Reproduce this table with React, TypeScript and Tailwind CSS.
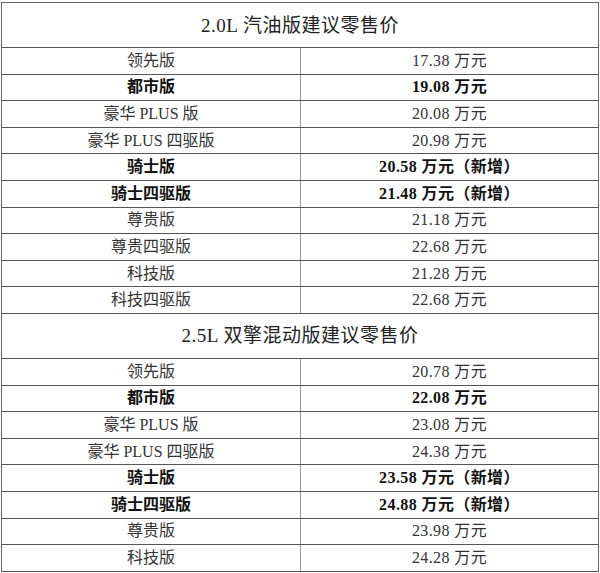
import React from 'react';

type Row = { name: string; price: string; bold?: boolean };

const petrol: Row[] = [
  { name: '领先版', price: '17.38 万元' },
  { name: '都市版', price: '19.08 万元', bold: true },
  { name: '豪华 PLUS 版', price: '20.08 万元' },
  { name: '豪华 PLUS 四驱版', price: '20.98 万元' },
  { name: '骑士版', price: '20.58 万元（新增）', bold: true },
  { name: '骑士四驱版', price: '21.48 万元（新增）', bold: true },
  { name: '尊贵版', price: '21.18 万元' },
  { name: '尊贵四驱版', price: '22.68 万元' },
  { name: '科技版', price: '21.28 万元' },
  { name: '科技四驱版', price: '22.68 万元' },
];

const hybrid: Row[] = [
  { name: '领先版', price: '20.78 万元' },
  { name: '都市版', price: '22.08 万元', bold: true },
  { name: '豪华 PLUS 版', price: '23.08 万元' },
  { name: '豪华 PLUS 四驱版', price: '24.38 万元' },
  { name: '骑士版', price: '23.58 万元（新增）', bold: true },
  { name: '骑士四驱版', price: '24.88 万元（新增）', bold: true },
  { name: '尊贵版', price: '23.98 万元' },
  { name: '科技版', price: '24.28 万元' },
];

const Section = ({ title, rows }: { title: string; rows: Row[] }) => (
  <>
    <div className="h-[45px] flex items-center justify-center border-b border-[#555] text-[19px] tracking-[0.5px] text-[#222]">
      {title}
    </div>
    {rows.map((r, i) => (
      <div key={i} className="grid grid-cols-[299px_1fr] h-[26.6px] border-b border-[#555]">
        <div
          className={`flex items-center justify-center border-r border-[#999] text-[16px] ${
            r.bold ? 'font-bold text-[#111]' : 'text-[#333]'
          }`}
        >
          {r.name}
        </div>
        <div
          className={`flex items-center justify-center text-[16px] tracking-[0.4px] ${
            r.bold ? 'font-bold text-[#111]' : 'text-[#333]'
          }`}
        >
          {r.price}
        </div>
      </div>
    ))}
  </>
);

export default function App() {
  return (
    <div
      className="w-[600px] h-[573px] bg-white pt-[2px] pl-[1px] overflow-hidden"
      style={{ fontFamily: '"Liberation Serif", "Noto Sans CJK SC", serif' }}
    >
      <div className="w-[598px] border-l border-r border-t border-[#666] leading-none">
        <Section title="2.0L 汽油版建议零售价" rows={petrol} />
        <Section title="2.5L 双擎混动版建议零售价" rows={hybrid} />
      </div>
    </div>
  );
}
